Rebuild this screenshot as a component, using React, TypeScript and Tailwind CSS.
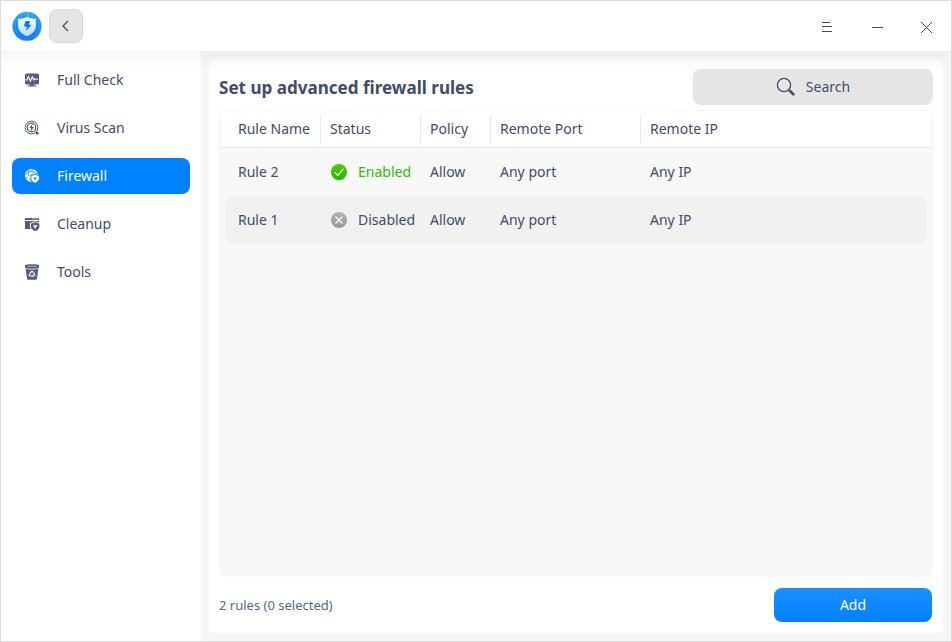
import type { ReactNode } from "react";

const INK = "#414d68";

function Logo() {
  return (
    <svg width="32" height="32" viewBox="0 0 32 32">
      <defs>
        <linearGradient id="disc" x1="0" y1="0" x2="0" y2="1">
          <stop offset="0" stopColor="#27a6f8" />
          <stop offset="1" stopColor="#0b78fb" />
        </linearGradient>
        <linearGradient id="shield" x1="0" y1="0" x2="0" y2="1">
          <stop offset="0" stopColor="#ffffff" />
          <stop offset="1" stopColor="#b9dcff" />
        </linearGradient>
      </defs>
      <circle cx="16" cy="16.500" r="15" fill="#c3d3e4" />
      <circle cx="16" cy="16.300" r="14.300" fill="url(#disc)" />
      <circle cx="16" cy="16.300" r="12.300" fill="none" stroke="#46aefc" strokeWidth=".5" />
      <path d="M17 3v4.500" stroke="#3fd4f4" strokeWidth="1.400" />
      <path d="M16 7c2.600 1.300 5.300 1.700 8.900 1.800v6.600c0 5-3.200 8.300-8.900 10.900-5.700-2.600-8.900-5.900-8.900-10.900V8.800C10.700 8.700 13.400 8.300 16 7z" fill="url(#shield)" />
      <path d="M14.600 11h4.500l-1.300 3.700h2.900L14.700 21.300l1.200-4.700h-3.100z" fill="#087cf2" />
    </svg>
  );
}

function FullCheckIcon() {
  return (
    <svg width="16" height="16" viewBox="0 0 16 16">
      <path d="M2.500 1.500h11A1.500 1.500 0 0 1 15 3v8a1.500 1.500 0 0 1-1.500 1.500h-11A1.500 1.500 0 0 1 1 11V3a1.500 1.500 0 0 1 1.500-1.500z" fill="#526079" />
      <path d="M6 12h4v1.300l2.500.4v.8h-9v-.8l2.500-.4z" fill="#526079" />
      <path d="M1.200 8h1.700l1.500-3.500 2 4.700 1.900-4.300 1.500 3 1-1.200 1.100.6H14" fill="none" stroke="#fff" strokeWidth="1.100" />
    </svg>
  );
}

function VirusIcon() {
  return (
    <svg width="16" height="16" viewBox="0 0 16 16" fill="none" stroke="#526079">
      <circle cx="7.500" cy="7.500" r="6.400" strokeWidth="1" />
      <circle cx="7.500" cy="7.500" r="4.300" strokeWidth="1.300" />
      <path d="M8.600 3.500 5.300 8h1.800l-.5 3.800L10 7H8.100z" fill="#526079" stroke="none" />
      <path d="m11.800 11.800 2.400 2.400" strokeWidth="2.600" />
    </svg>
  );
}

function FirewallIcon() {
  return (
    <svg width="16" height="16" viewBox="0 0 16 16">
      <circle cx="7.400" cy="7.400" r="6.500" fill="#fff" />
      <path d="M.8 6.800 5 3.300M5 3.300 3 1.500M5 3.300c3-.4 6 .7 8 2.700M9.500 1 7 3.300M5 3.300c-.6 2-.6 4 .2 6M10 4.500 5.200 9.300M1 10.200l4.200-.9M5.200 9.300 8 14" stroke="#0081ff" strokeWidth=".8" fill="none" />
      <circle cx="5.200" cy="9.300" r="1.300" fill="#fff" />
      <path d="M11.100 6.200c1.300.8 2.400 1.100 4.200 1.200v3.200c0 2.100-1.400 3.400-4.200 4.700-2.800-1.300-4.200-2.600-4.200-4.700V7.400c1.800-.1 2.900-.4 4.200-1.200z" fill="#fff" stroke="#0081ff" strokeWidth=".9" />
      <path d="M9.400 9.600h3.400l-1.700 3z" fill="#0081ff" />
    </svg>
  );
}

function CleanupIcon() {
  return (
    <svg width="16" height="16" viewBox="0 0 16 16">
      <path d="M1 2h14v2H1zM1 5h14v8H1z" fill="#526079" />
      <path d="M8.500 2.900h1M10.600 2.900h1M12.700 2.900h1" stroke="#fff" />
      <path d="M11.200 5.500c1.400 1 2.700 1.400 4.700 1.500v3.500c0 2.400-1.600 3.900-4.700 5.200-3.100-1.300-4.700-2.800-4.700-5.200V7c2-.1 3.300-.5 4.700-1.500z" fill="#526079" stroke="#fff" strokeWidth="1" />
      <path d="M9 9.300h4.400l-2.200 3.700z" fill="#fff" />
    </svg>
  );
}

function ToolsIcon() {
  return (
    <svg width="16" height="16" viewBox="0 0 16 16">
      <path d="M1 1.700C1 .8 4 .3 8 .3s7 .5 7 1.400v1.700c0 .8-3 1.300-7 1.300s-7-.5-7-1.300z" fill="#526079" />
      <path d="M3.500 2.200h9" stroke="#fff" strokeWidth=".5" />
      <path d="M1.600 4.700c3.600 1 9.200 1 12.800 0L13 14.500c-.1.800-.7 1.300-1.500 1.300h-7c-.8 0-1.400-.5-1.500-1.300z" fill="#526079" />
      <path d="M6.700 8.300c.6-1 2-1 2.600 0l1.200 2c.5.9 0 1.700-1 1.700h-3c-1 0-1.500-.8-1-1.700z" fill="none" stroke="#fff" strokeWidth="1.300" strokeDasharray="3 .5" />
    </svg>
  );
}

function StatusIcon({ on }: { on: boolean }) {
  return (
    <svg className="mt-px" width="18" height="20" viewBox="0 0 18 20">
      <defs>
        <linearGradient id={on ? "on" : "off"} x1="0" y1="0" x2="0" y2="1">
          <stop offset="0" stopColor={on ? "#52cb00" : "#b3b3b3"} />
          <stop offset="1" stopColor={on ? "#22b600" : "#999999"} />
        </linearGradient>
      </defs>
      {on && <ellipse cx="9" cy="13" rx="6.500" ry="5.300" fill="#cbeedd" />}
      <circle cx="9" cy="9" r="8" fill={on ? "url(#on)" : "url(#off)"} />
      <path d={on ? "m4.700 9.200 3.100 3.100 5.700-6.400" : "m5.500 5.500 7 7m0-7-7 7"} stroke="#fff" strokeWidth="1.200" fill="none" />
    </svg>
  );
}

const nav: { label: string; icon: ReactNode; active?: boolean }[] = [
  { label: "Full Check", icon: <FullCheckIcon /> },
  { label: "Virus Scan", icon: <VirusIcon /> },
  { label: "Firewall", icon: <FirewallIcon />, active: true },
  { label: "Cleanup", icon: <CleanupIcon /> },
  { label: "Tools", icon: <ToolsIcon /> },
];

const headings = ["Status", "Policy", "Remote Port", "Remote IP"];

const rules = [
  { name: "Rule 2", on: true },
  { name: "Rule 1", on: false },
];

export default function App() {
  return (
    <div className="flex h-[642px] w-[952px] flex-col overflow-hidden border border-[#dcdcdc] bg-white font-['Noto_Sans',sans-serif] text-sm text-[#414d68]">
      <header className="flex h-[50px] shrink-0 items-center pl-[10px]">
        <Logo />
        <button className="ml-[6px] flex h-[34px] w-[34px] items-center justify-center rounded-lg border border-[#d9d9d9] bg-[#e5e5e5]">
          <svg width="12" height="12" viewBox="0 0 12 12" fill="none" stroke={INK} strokeWidth="1.300">
            <path d="M8 1 3 6l5 5" />
          </svg>
        </button>
        <div className="ml-auto flex items-center pr-[19px] pt-[2px]">
          <svg className="mr-[40px]" width="10" height="10" viewBox="0 0 10 10" fill={INK} shapeRendering="crispEdges">
            <path d="M0 0h8v1H0zM0 4h10v1H0zM0 9h10v1H0z" />
          </svg>
          <div className="mr-[38px] h-px w-[11px] bg-[#414d68]" />
          <svg width="11" height="11" viewBox="0 0 11 11" stroke={INK} strokeWidth="1">
            <path d="m0 0 11 11m0-11-11 11" />
          </svg>
        </div>
      </header>

      <div className="flex min-h-0 flex-1">
        <nav className="flex w-[200px] flex-col gap-3 bg-linear-to-b from-[#f7f7f7] to-white to-[20px] px-[11px] pt-[11px]">
          {nav.map((n) => (
            <div key={n.label} className={`flex h-9 items-center gap-[17px] rounded-lg pl-3 ${n.active ? "bg-[#0081ff] text-white" : ""}`}>
              {n.icon}
              <span>{n.label}</span>
            </div>
          ))}
        </nav>

        <main className="flex flex-1 bg-linear-to-b from-[#efefef] to-[#f7f7f7] to-[20px] p-2">
          <section className="flex flex-1 flex-col rounded-lg bg-linear-to-b from-[#f9f9f9] to-white to-[14px] p-[10px]">
            <div className="flex h-9 items-center justify-between">
              <h1 className="pt-[2px] text-[17.070px] font-bold">Set up advanced firewall rules</h1>
              <div className="flex h-9 w-[240px] items-center justify-center gap-[10px] rounded-lg bg-[#e5e5e5]">
                <svg width="20" height="20" viewBox="0 0 20 20" fill="none" stroke={INK}>
                  <circle cx="8" cy="8" r="6.600" strokeWidth="1.300" />
                  <path d="m12.700 12.700 1.300 1.300" strokeWidth="1.300" />
                  <path d="m13.500 13.500 4.700 4.700" strokeWidth="2.600" />
                </svg>
                <span>Search</span>
              </div>
            </div>

            <div className="mt-[5px] flex h-[467px] flex-col overflow-hidden rounded-lg bg-[#f8f8f8]">
              <div className="grid h-[38px] shrink-0 grid-cols-[101px_100px_70px_150px_1fr] items-center rounded-t-lg border border-[#f5f5f5] border-b-[#e9e9e9] bg-white">
                <div className="pl-[18px]">Rule Name</div>
                {headings.map((h) => (
                  <div key={h} className="-ml-px flex h-[29px] items-center border-l border-[#e9e9e9] pl-[9px]">
                    {h}
                  </div>
                ))}
              </div>
              {rules.map((r) => (
                <div key={r.name} className={`mx-[6px] grid h-12 shrink-0 grid-cols-[105px_100px_70px_150px_1fr] items-center rounded-lg ${r.on ? "" : "bg-[#f1f1f1]"}`}>
                  <div className="pl-[13px]">{r.name}</div>
                  <div className={`flex items-center gap-[10px] ${r.on ? "text-[#2fbe00]" : ""}`}>
                    <StatusIcon on={r.on} />
                    <span>{r.on ? "Enabled" : "Disabled"}</span>
                  </div>
                  <div>Allow</div>
                  <div>Any port</div>
                  <div>Any IP</div>
                </div>
              ))}
            </div>

            <div className="mt-[11px] flex h-[34px] items-center justify-between pr-px">
              <span className="text-[13px] text-[#526a7f]">2 rules (0 selected)</span>
              <button className="h-[34px] w-[158px] rounded-lg bg-linear-to-b from-[#1a90ff] to-[#0081ff] text-white">Add</button>
            </div>
          </section>
        </main>
      </div>
    </div>
  );
}
